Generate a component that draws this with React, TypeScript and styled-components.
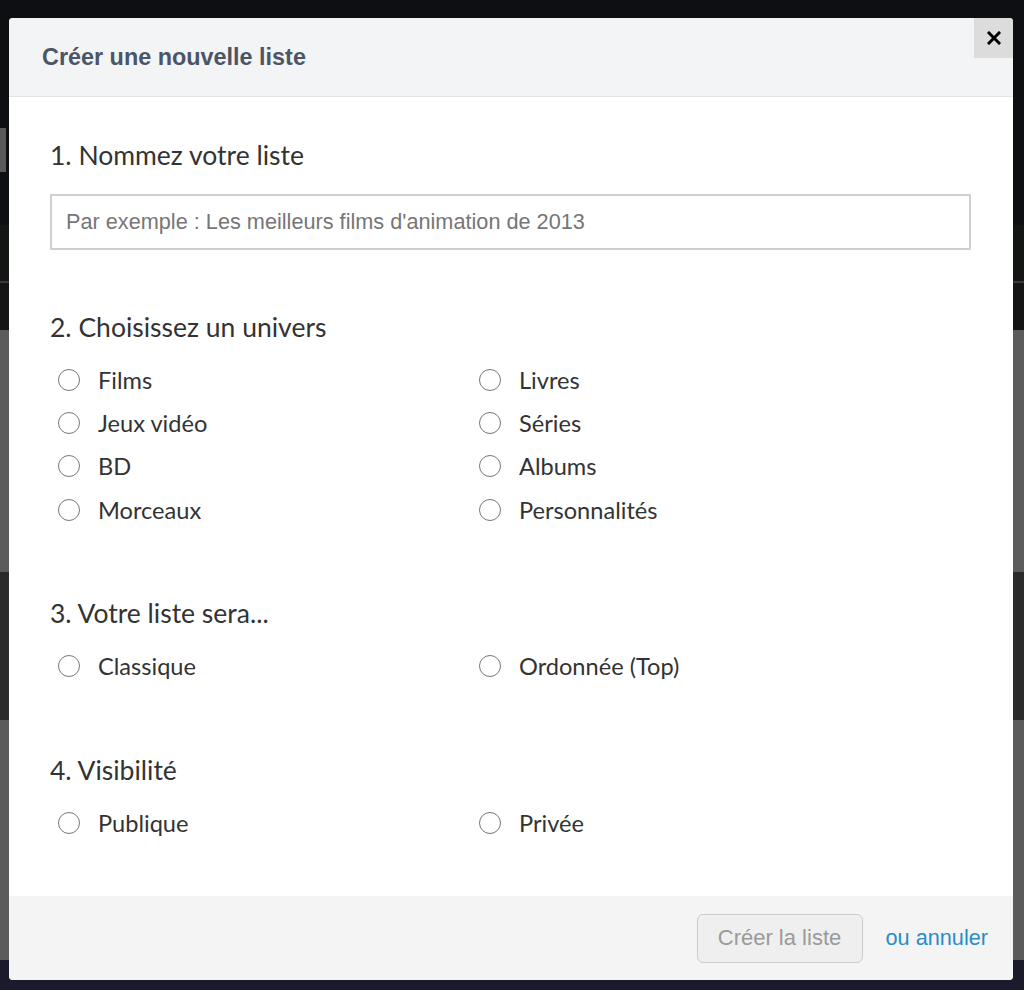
import React from "react";
import styled, { createGlobalStyle } from "styled-components";

const Global = createGlobalStyle`
  html, body { margin: 0; padding: 0; }
  body { width: 1024px; height: 990px; overflow: hidden; background: #0d0f13; font-family: "Lato", "Liberation Sans", sans-serif; }
  * { box-sizing: border-box; }
`;

const Stage = styled.div`
  position: relative;
  width: 1024px;
  height: 990px;
  overflow: hidden;
`;

const Backdrop = styled.div`
  display: flex;
  flex-direction: column;
  height: 100%;
`;

const Band = styled.div<{ $h: number; $bg: string }>`
  height: ${(p) => p.$h}px;
  background: ${(p) => p.$bg};
  flex: none;
  position: relative;
`;

const SideBlock = styled.div`
  position: absolute;
  left: 0;
  top: 28px;
  width: 6px;
  height: 44px;
  background: #5a5a5a;
`;

const Modal = styled.div`
  position: absolute;
  left: 9px;
  top: 18px;
  width: 1004px;
  height: 962px;
  background: #fff;
  border-radius: 4px;
  overflow: hidden;
  display: flex;
  flex-direction: column;
`;

const Header = styled.div`
  height: 79px;
  flex: none;
  background: #f3f4f6;
  border-bottom: 1px solid #e2e4e7;
  display: flex;
  align-items: center;
  justify-content: space-between;
  padding-left: 33px;
`;

const Title = styled.h1`
  margin: 0;
  font-family: "Liberation Sans", Arial, sans-serif;
  font-weight: 700;
  font-size: 23.4px;
  color: #4b5565;
`;

const CloseButton = styled.button`
  align-self: flex-start;
  width: 39px;
  height: 40px;
  border: none;
  background: #dcdcdc;
  display: flex;
  align-items: center;
  justify-content: center;
  padding: 0;
  cursor: pointer;
`;

const Body = styled.div`
  flex: 1;
  padding: 43px 41px 0 41px;
  display: flex;
  flex-direction: column;
`;

const Section = styled.section<{ $gap: number }>`
  margin-bottom: ${(p) => p.$gap}px;
`;

const Heading = styled.h2<{ $mb: number }>`
  margin: 0 0 ${(p) => p.$mb}px 0;
  font-family: "Lato", sans-serif;
  font-weight: 400;
  font-size: 26.5px;
  line-height: 30px;
  color: #333;
`;

const TextInput = styled.input`
  display: block;
  width: 921px;
  height: 56px;
  border: 2px solid #cfcfcf;
  border-radius: 1px;
  padding: 0 14px;
  font-family: "Liberation Sans", Arial, sans-serif;
  font-size: 21.7px;
  color: #333;
  outline: none;
  &::placeholder { color: #767676; }
`;

const RadioGrid = styled.div`
  display: grid;
  grid-template-columns: 421px 1fr;
  grid-auto-rows: 43.3px;
  padding-left: 8px;
`;

const RadioItem = styled.label`
  display: flex;
  align-items: center;
  gap: 18px;
  font-family: "Lato", sans-serif;
  font-size: 23.6px;
  color: #333;
  cursor: pointer;
`;

const Circle = styled.span`
  width: 22px;
  height: 22px;
  border: 1.5px solid #777;
  border-radius: 50%;
  background: #fff;
  flex: none;
`;

const Footer = styled.div`
  height: 84px;
  flex: none;
  background: #f4f4f4;
  display: flex;
  align-items: center;
  justify-content: flex-end;
  padding-right: 25px;
  gap: 23px;
`;

const SubmitButton = styled.button`
  width: 166px;
  height: 49px;
  border: 1px solid #cccccc;
  border-radius: 6px;
  background: #efefef;
  color: #9a9a9a;
  font-family: "Liberation Sans", Arial, sans-serif;
  font-size: 22px;
  padding: 0;
`;

const CancelLink = styled.a`
  font-family: "Liberation Sans", Arial, sans-serif;
  font-size: 21.7px;
  color: #2b8cc4;
  text-decoration: none;
  cursor: pointer;
`;

const Radio = ({ label }: { label: string }) => (
  <RadioItem>
    <Circle />
    {label}
  </RadioItem>
);

export default function App() {
  return (
    <Stage>
      <Global />
      <Backdrop>
        <Band $h={100} $bg="#0d0f13" />
        <Band $h={125} $bg="#0d0f13">
          <SideBlock />
        </Band>
        <Band $h={56} $bg="#141614" />
        <Band $h={2} $bg="#3a3a3a" />
        <Band $h={47} $bg="#151515" />
        <Band $h={242} $bg="#5c5c5c" />
        <Band $h={148} $bg="#2b2b2b" />
        <Band $h={240} $bg="#5b5b5b" />
        <Band $h={30} $bg="#1b1a2c" />
      </Backdrop>
      <Modal role="dialog">
        <Header>
          <Title>Créer une nouvelle liste</Title>
          <CloseButton aria-label="Fermer">
            <svg width="14" height="14" viewBox="0 0 14 14">
              <path d="M2 2 L12 12 M12 2 L2 12" stroke="#000" strokeWidth="3" strokeLinecap="square" />
            </svg>
          </CloseButton>
        </Header>
        <Body>
          <Section $gap={62}>
            <Heading $mb={24}>1. Nommez votre liste</Heading>
            <TextInput placeholder="Par exemple : Les meilleurs films d'animation de 2013" />
          </Section>
          <Section $gap={67}>
            <Heading $mb={16}>2. Choisissez un univers</Heading>
            <RadioGrid>
              <Radio label="Films" />
              <Radio label="Livres" />
              <Radio label="Jeux vidéo" />
              <Radio label="Séries" />
              <Radio label="BD" />
              <Radio label="Albums" />
              <Radio label="Morceaux" />
              <Radio label="Personnalités" />
            </RadioGrid>
          </Section>
          <Section $gap={68}>
            <Heading $mb={16}>3. Votre liste sera...</Heading>
            <RadioGrid>
              <Radio label="Classique" />
              <Radio label="Ordonnée (Top)" />
            </RadioGrid>
          </Section>
          <Section $gap={0}>
            <Heading $mb={16}>4. Visibilité</Heading>
            <RadioGrid>
              <Radio label="Publique" />
              <Radio label="Privée" />
            </RadioGrid>
          </Section>
        </Body>
        <Footer>
          <SubmitButton disabled>Créer la liste</SubmitButton>
          <CancelLink>ou annuler</CancelLink>
        </Footer>
      </Modal>
    </Stage>
  );
}
